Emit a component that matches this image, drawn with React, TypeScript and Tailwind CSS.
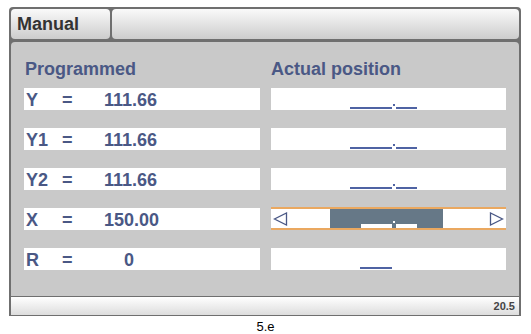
import React from "react";

const BLUE = "text-[#4a5885]";

function Underscores({ offset, first, second, color = "bg-[#4f63a3]" }: { offset: number; first: number; second: number; color?: string }) {
  return (
    <div className="relative h-full w-full">
      <div className={`absolute bottom-[1px] h-[2px] ${color}`} style={{ left: offset, width: first }} />
      {second > 0 && (
        <>
          <div className={`absolute bottom-[4px] h-[2px] w-[2px] ${color}`} style={{ left: offset + first + 1 }} />
          <div className={`absolute bottom-[1px] h-[2px] ${color}`} style={{ left: offset + first + 4, width: second }} />
        </>
      )}
    </div>
  );
}

function Row({ label, value, valueOffset = 0, children, highlight = false }: { label: string; value: string; valueOffset?: number; children: React.ReactNode; highlight?: boolean }) {
  return (
    <div className="flex gap-[11px] h-[22px]">
      <div className={`w-[236px] h-[22px] bg-white flex pt-[2px] pl-[2px] text-[18px] leading-[20px] font-bold ${BLUE}`}>
        <span className="w-[36px]">{label}</span>
        <span className="w-[42px]">=</span>
        <span style={{ marginLeft: valueOffset }}>{value}</span>
      </div>
      <div className={`w-[235px] bg-white ${highlight ? "h-[23px] -mt-[1px] border-y-2 border-[#eaa860]" : "h-[22px]"}`}>
        {children}
      </div>
    </div>
  );
}

function Tri({ dir }: { dir: "l" | "r" }) {
  return (
    <svg width="15" height="14" viewBox="0 0 15 14" className="shrink-0">
      {dir === "l" ? (
        <polygon points="13.5,1 13.5,13 1.5,7" fill="none" stroke="#4a5885" strokeWidth="1.3" />
      ) : (
        <polygon points="1.5,1 1.5,13 13.5,7" fill="none" stroke="#4a5885" strokeWidth="1.3" />
      )}
    </svg>
  );
}

export default function App() {
  return (
    <div className="w-[531px] h-[334px] bg-white font-['Liberation_Sans',Arial,sans-serif] overflow-hidden">
      <div className="ml-[9px] pt-[7px]">
        <div className="w-[512px] h-[309px] bg-[#6f6f6f] rounded-t-[4px] pt-[2px] pb-[1px] px-[2px] flex flex-col">
          <div className="flex gap-[2px] h-[30px]">
            <div className="w-[99px] h-full rounded-[4px] bg-gradient-to-b from-[#fafafa] to-[#cdcdcd] flex items-center pl-[6px] text-[18px] leading-[20px] font-bold text-[#333333]">
              Manual
            </div>
            <div className="flex-1 h-full rounded-[4px] bg-gradient-to-b from-[#fafafa] to-[#cdcdcd]" />
          </div>
          <div className="mt-[3px] h-[254px] bg-[#c9c9c9] rounded-t-[4px] pt-[17px] pl-[13px]">
            <div className={`flex gap-[11px] h-[20px] text-[18px] leading-[20px] font-bold ${BLUE}`}>
              <div className="w-[236px] pl-[1px]">Programmed</div>
              <div className="w-[235px]">Actual position</div>
            </div>
            <div className="mt-[9px] flex flex-col gap-[18px]">
              <Row label="Y" value="111.66">
                <Underscores offset={79} first={42} second={21} />
              </Row>
              <Row label="Y1" value="111.66">
                <Underscores offset={79} first={42} second={21} />
              </Row>
              <Row label="Y2" value="111.66">
                <Underscores offset={79} first={42} second={21} />
              </Row>
              <Row label="X" value="150.00" highlight>
                <div className="flex items-center h-full pl-[2px] pr-[2px]">
                  <Tri dir="l" />
                  <div className="ml-[42px] w-[113px] h-full bg-[#667887] relative">
                    <div className="absolute bottom-0 left-[31px] w-[31px] h-[4px] bg-white" />
                    <div className="absolute bottom-[5px] left-[63px] w-[2px] h-[2px] bg-white" />
                    <div className="absolute bottom-0 left-[66px] w-[21px] h-[4px] bg-white" />
                  </div>
                  <div className="flex-1" />
                  <Tri dir="r" />
                </div>
              </Row>
              <Row label="R" value="0" valueOffset={20}>
                <Underscores offset={89} first={32} second={0} />
              </Row>
            </div>
          </div>
          <div className="mt-[1px] h-[18px] bg-gradient-to-b from-[#ffffff] to-[#dddddd] flex items-center justify-end pr-[4px] text-[11px] font-bold text-[#444444]">
            20.5
          </div>
        </div>
      </div>
      <div className="text-center text-[13px] leading-[15px] mt-[3px] text-black">5.e</div>
    </div>
  );
}
